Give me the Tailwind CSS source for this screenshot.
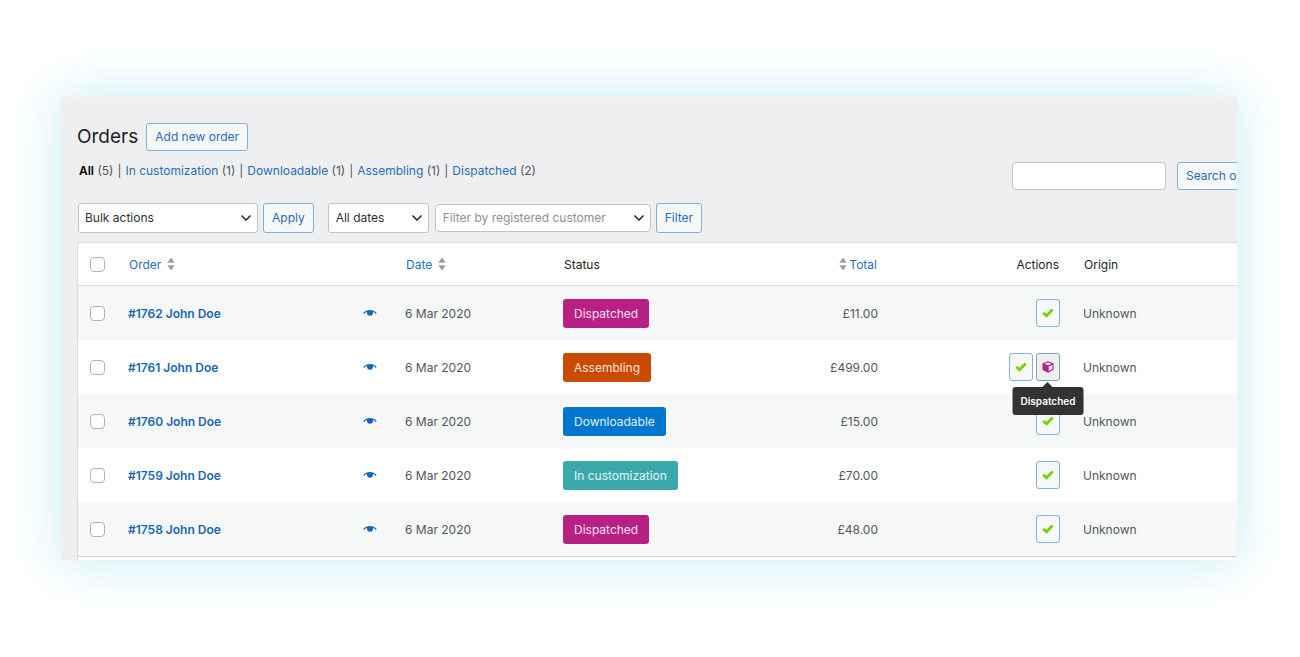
<!DOCTYPE html>
<html lang="en">
<head>
    <meta charset="UTF-8" />
    <meta name="viewport" content="width=device-width, initial-scale=1" />
    <title>Orders</title>
    <script src="https://cdn.jsdelivr.net/npm/@tailwindcss/browser@4"></script>
</head>
<body class="min-h-screen bg-white pt-[97px] pb-[97px] pl-[61px] pr-[63px] font-['Inter',sans-serif] text-[13px] leading-5 text-[#50575e]">
<svg class="hidden">
    <symbol id="chevron" viewBox="0 0 12 8"><path d="M1.500 1.500 6 6l4.500-4.500" fill="none" stroke="#2c3338" stroke-width="1.600" /></symbol>
    <symbol id="sort" viewBox="0 0 8 14"><path d="M4 .5 7.700 5.800H.3zM4 13.500 .3 8.200h7.400z" fill="#9a9da1" /></symbol>
    <symbol id="eye" viewBox="0 0 14 8"><path d="M.3 4C2 2 4.300.9 7 .9S12 2 13.700 4l-1 .9C12 4 11 3.200 10.100 2.800 10.500 5 9.200 6.800 7 6.800S3.500 5 3.900 2.800C3 3.200 2 4 1.300 4.900z" fill="#1667b3" /></symbol>
    <symbol id="tick" viewBox="0 0 12 10"><path d="M1.300 4.800 4.500 7.800 10.700 1.600" fill="none" stroke="#7ad003" stroke-width="2.800" /></symbol>
    <symbol id="cube" viewBox="0 0 12 12"><path d="M6 .3 11.500 2.300v6.600L6 11.700.5 8.900V2.300z" fill="#b92083" /><path d="M6 1.500 9.700 2.800 6 4.200 2.300 2.800zM6.700 5.300 10.400 3.900v4.300L6.700 10.100z" fill="#f0f0f1" /></symbol>
</svg>

<main class="h-[463px] shadow-[0_0_50px_4px_#cdeef5]">
    <div class="h-full overflow-hidden bg-[#efeff1] pl-4 pt-[26px]">
        <div class="flex items-center gap-2">
            <h1 class="text-[19px] leading-7 text-[#1d2327]">Orders</h1>
            <button class="h-7 rounded-[3px] border border-[#7fb0dc] bg-[#f6f7f7] px-2 text-[12px] text-[#1f70b8]">Add new order</button>
        </div>

        <div class="mt-[11px] flex items-start justify-between">
            <ul class="flex whitespace-nowrap pl-0.5 text-[12px] leading-[18px]">
                <li><a href="#" class="font-semibold text-black">All</a> (5)<span class="mx-1">|</span></li>
                <li><a href="#" class="text-[#1f70b8]">In customization</a> (1)<span class="mx-1">|</span></li>
                <li><a href="#" class="text-[#1f70b8]">Downloadable</a> (1)<span class="mx-1">|</span></li>
                <li><a href="#" class="text-[#1f70b8]">Assembling</a> (1)<span class="mx-1">|</span></li>
                <li><a href="#" class="text-[#1f70b8]">Dispatched</a> (2)</li>
            </ul>
            <form class="-mr-10 flex gap-[11px]">
                <input type="search" aria-label="Search orders" class="h-7 w-[154px] rounded-[4px] border border-[#c0c3c7] bg-white px-2" />
                <button type="button" class="h-7 w-[100px] whitespace-nowrap rounded-[3px] border border-[#7fb0dc] bg-[#f6f7f7] px-2 text-left text-[12px] text-[#1f70b8]">Search orders</button>
            </form>
        </div>

        <div class="mt-[13px] flex items-center pl-px text-[12px] text-[#2c3338]">
            <div class="relative">
                <select aria-label="Bulk actions" class="h-[30px] w-[180px] appearance-none rounded-[3px] border border-[#c0c3c7] bg-white pl-1.5">
                    <option>Bulk actions</option>
                </select>
                <svg class="pointer-events-none absolute right-1.5 top-[11px] h-2 w-3"><use href="#chevron" /></svg>
            </div>
            <button class="ml-[5px] h-[30px] rounded-[3px] border border-[#7fb0dc] bg-[#f6f7f7] px-2 text-[#1f70b8]">Apply</button>
            <div class="relative ml-3.5">
                <select aria-label="Filter by date" class="h-[30px] w-[101px] appearance-none rounded-[3px] border border-[#c0c3c7] bg-white pl-[7px]">
                    <option>All dates</option>
                </select>
                <svg class="pointer-events-none absolute right-1.5 top-[11px] h-2 w-3"><use href="#chevron" /></svg>
            </div>
            <div class="relative ml-1.5">
                <select aria-label="Filter by registered customer" class="h-7 w-[216px] appearance-none rounded-[4px] border border-[#c0c3c7] bg-white pl-[7px] text-[#8f8f8f]">
                    <option>Filter by registered customer</option>
                </select>
                <svg class="pointer-events-none absolute right-1.5 top-2.5 h-2 w-3"><use href="#chevron" /></svg>
            </div>
            <button class="ml-[5px] h-[30px] rounded-[3px] border border-[#7fb0dc] bg-[#f6f7f7] px-2 text-[#1f70b8]">Filter</button>
        </div>

        <table class="mt-[9px] w-full table-fixed border-separate border-spacing-0 border-l border-t border-[#dcdcde] bg-white text-left text-[12px] leading-[15px]">
            <colgroup>
                <col class="w-[50px]" />
                <col class="w-[277px]" />
                <col class="w-[158px]" />
                <col class="w-[190px]" />
                <col class="w-[125px]" />
                <col class="w-[182px]" />
                <col />
            </colgroup>
            <thead>
                <tr class="h-[43px] text-[#1d2327] *:border-b *:border-[#dcdcde] *:px-px *:font-normal">
                    <th><input type="checkbox" aria-label="Select all" class="ml-[11px] block size-[15px] appearance-none rounded-[4px] border border-[#b0b2b5] bg-white" /></th>
                    <th><a href="#" class="flex items-center gap-1.5 text-[#1f70b8]">Order <svg class="h-3.5 w-2"><use href="#sort" /></svg></a></th>
                    <th><a href="#" class="flex items-center gap-1.5 text-[#1f70b8]">Date <svg class="h-3.5 w-2"><use href="#sort" /></svg></a></th>
                    <th>Status</th>
                    <th><a href="#" class="flex items-center justify-end gap-0.5 text-[#1f70b8]"><svg class="h-3.5 w-2"><use href="#sort" /></svg> Total</a></th>
                    <th class="text-right">Actions</th>
                    <th><div class="pl-[23px]">Origin</div></th>
                </tr>
            </thead>
            <tbody>
                <tr class="h-[54px] bg-[#f6f7f7]">
                    <td><input type="checkbox" aria-label="Select order 1762" class="ml-3 block size-[15px] appearance-none rounded-[4px] border border-[#b0b2b5] bg-white" /></td>
                    <td><div class="flex items-center justify-between pr-7"><a href="#" class="font-semibold text-[#1667b3]">#1762 John Doe</a><a href="#" aria-label="Preview"><svg class="h-2 w-3.5"><use href="#eye" /></svg></a></div></td>
                    <td>6 Mar 2020</td>
                    <td><mark class="inline-block rounded-[3px] bg-[#b92083] px-[11px] py-[7px] align-middle text-[#f8e0ef]">Dispatched</mark></td>
                    <td class="text-right">£11.00</td>
                    <td><div class="flex justify-end gap-[3px]">
                        <button aria-label="Complete" class="flex h-7 w-6 items-center justify-center rounded-[3px] border border-[#85b3dc] bg-[#f6f7f7]"><svg class="h-2.5 w-3"><use href="#tick" /></svg></button>
                    </div></td>
                    <td class="pl-[23px]">Unknown</td>
                </tr>
                <tr class="h-[54px] bg-white">
                    <td><input type="checkbox" aria-label="Select order 1761" class="ml-3 block size-[15px] appearance-none rounded-[4px] border border-[#b0b2b5] bg-white" /></td>
                    <td><div class="flex items-center justify-between pr-7"><a href="#" class="font-semibold text-[#1667b3]">#1761 John Doe</a><a href="#" aria-label="Preview"><svg class="h-2 w-3.5"><use href="#eye" /></svg></a></div></td>
                    <td>6 Mar 2020</td>
                    <td><mark class="inline-block rounded-[3px] bg-[#ca4a00] px-[11px] py-[7px] align-middle text-[#fbe6da]">Assembling</mark></td>
                    <td class="text-right">£499.00</td>
                    <td><div class="flex justify-end gap-[3px]">
                        <button aria-label="Complete" class="flex h-7 w-6 items-center justify-center rounded-[3px] border border-[#85b3dc] bg-[#f6f7f7]"><svg class="h-2.5 w-3"><use href="#tick" /></svg></button>
                        <div class="relative">
                            <button aria-describedby="tip" aria-label="Dispatch" class="flex h-7 w-6 items-center justify-center rounded-[3px] border border-[#7f9fc0] bg-[#f0f0f1]"><svg class="size-3"><use href="#cube" /></svg></button>
                            <div id="tip" role="tooltip" class="absolute left-1/2 top-[34px] z-10 -translate-x-1/2 rounded-[3px] bg-[#333] px-2 py-1.5 text-[10px] leading-4 font-semibold text-white">
                                Dispatched
                                <svg class="absolute bottom-full left-1/2 h-[5px] w-2.5 -translate-x-1/2" viewBox="0 0 10 5"><path d="M0 5 5 0l5 5z" fill="#333" /></svg>
                            </div>
                        </div>
                    </div></td>
                    <td class="pl-[23px]">Unknown</td>
                </tr>
                <tr class="h-[54px] bg-[#f6f7f7]">
                    <td><input type="checkbox" aria-label="Select order 1760" class="ml-3 block size-[15px] appearance-none rounded-[4px] border border-[#b0b2b5] bg-white" /></td>
                    <td><div class="flex items-center justify-between pr-7"><a href="#" class="font-semibold text-[#1667b3]">#1760 John Doe</a><a href="#" aria-label="Preview"><svg class="h-2 w-3.5"><use href="#eye" /></svg></a></div></td>
                    <td>6 Mar 2020</td>
                    <td><mark class="inline-block rounded-[3px] bg-[#0076cc] px-[11px] py-[7px] align-middle text-[#e0f0fb]">Downloadable</mark></td>
                    <td class="text-right">£15.00</td>
                    <td><div class="flex justify-end gap-[3px]">
                        <button aria-label="Complete" class="flex h-7 w-6 items-center justify-center rounded-[3px] border border-[#85b3dc] bg-[#f6f7f7]"><svg class="h-2.5 w-3"><use href="#tick" /></svg></button>
                    </div></td>
                    <td class="pl-[23px]">Unknown</td>
                </tr>
                <tr class="h-[54px] bg-white">
                    <td><input type="checkbox" aria-label="Select order 1759" class="ml-3 block size-[15px] appearance-none rounded-[4px] border border-[#b0b2b5] bg-white" /></td>
                    <td><div class="flex items-center justify-between pr-7"><a href="#" class="font-semibold text-[#1667b3]">#1759 John Doe</a><a href="#" aria-label="Preview"><svg class="h-2 w-3.5"><use href="#eye" /></svg></a></div></td>
                    <td>6 Mar 2020</td>
                    <td><mark class="inline-block rounded-[3px] bg-[#3aa8ab] px-[11px] py-[7px] align-middle text-[#e2f6f6]">In customization</mark></td>
                    <td class="text-right">£70.00</td>
                    <td><div class="flex justify-end gap-[3px]">
                        <button aria-label="Complete" class="flex h-7 w-6 items-center justify-center rounded-[3px] border border-[#85b3dc] bg-[#f6f7f7]"><svg class="h-2.5 w-3"><use href="#tick" /></svg></button>
                    </div></td>
                    <td class="pl-[23px]">Unknown</td>
                </tr>
                <tr class="h-[54px] bg-[#f6f7f7]">
                    <td><input type="checkbox" aria-label="Select order 1758" class="ml-3 block size-[15px] appearance-none rounded-[4px] border border-[#b0b2b5] bg-white" /></td>
                    <td><div class="flex items-center justify-between pr-7"><a href="#" class="font-semibold text-[#1667b3]">#1758 John Doe</a><a href="#" aria-label="Preview"><svg class="h-2 w-3.5"><use href="#eye" /></svg></a></div></td>
                    <td>6 Mar 2020</td>
                    <td><mark class="inline-block rounded-[3px] bg-[#b92083] px-[11px] py-[7px] align-middle text-[#f8e0ef]">Dispatched</mark></td>
                    <td class="text-right">£48.00</td>
                    <td><div class="flex justify-end gap-[3px]">
                        <button aria-label="Complete" class="flex h-7 w-6 items-center justify-center rounded-[3px] border border-[#85b3dc] bg-[#f6f7f7]"><svg class="h-2.5 w-3"><use href="#tick" /></svg></button>
                    </div></td>
                    <td class="pl-[23px]">Unknown</td>
                </tr>
            </tbody>
            <tfoot>
                <tr class="h-11"><td colspan="7" class="border-t border-[#d0d1d3]"></td></tr>
            </tfoot>
        </table>
    </div>
</main>
</body>
</html>
